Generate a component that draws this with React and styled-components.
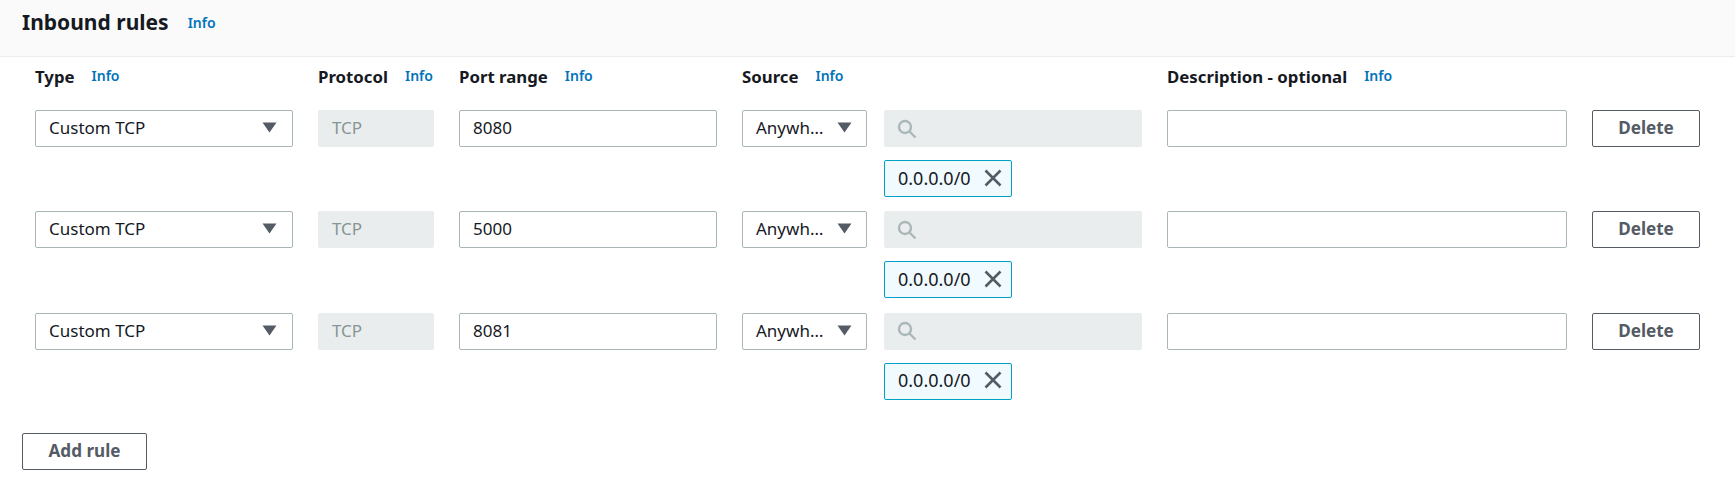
import React from 'react'
import styled, { createGlobalStyle } from 'styled-components'

const GlobalStyle = createGlobalStyle`
  html, body {
    margin: 0;
    padding: 0;
    background: #ffffff;
    font-family: "Noto Sans", "Open Sans", sans-serif;
    color: #16191f;
  }
`

const Page = styled.div`
  width: 1735px;
  height: 478px;
  overflow: hidden;
`

const Header = styled.div`
  height: 57px;
  box-sizing: border-box;
  padding: 7px 22px 0;
  background: #fafafa;
  border-bottom: 1px solid #eaeded;
  display: flex;
  align-items: flex-start;
  gap: 19px;
`

const Title = styled.h2`
  margin: 0;
  font-size: 21px;
  line-height: 30px;
  font-weight: 700;
`

const Info = styled.a`
  font-size: 14px;
  line-height: 20px;
  font-weight: 600;
  color: #0073bb;
  margin-top: ${props => props.$top || 0}px;
`

const Grid = styled.div`
  display: grid;
  grid-template-columns: 258px 116px 258px 400px 400px 108px;
  column-gap: 25px;
  padding-left: 35px;
`

const Label = styled.div`
  display: flex;
  align-items: center;
  gap: 17px;
  height: 40px;
  box-sizing: border-box;
  padding-bottom: 2px;
  margin-bottom: 13px;
  font-size: 16.8px;
  font-weight: 700;
  white-space: nowrap;
`

const Rule = styled.div`
  display: contents;
`

const Cell = styled.div`
  height: 101.4px;
`

const Field = styled.div`
  height: 37px;
  box-sizing: border-box;
  display: flex;
  align-items: center;
  padding: 0 12px 2px 13px;
  font-size: 17px;
  border-radius: 2px;
  background: ${props => (props.$disabled ? '#eaeded' : '#ffffff')};
  color: ${props => (props.$disabled ? '#879596' : '#16191f')};
  border: 1px solid ${props => (props.$disabled ? '#eaeded' : '#aab7b8')};
`

const Select = styled(Field)`
  justify-content: space-between;
  white-space: nowrap;
  padding-right: ${props => props.$caretGap}px;
`

const SourceCell = styled(Cell)`
  display: grid;
  grid-template-columns: 125px 258px;
  column-gap: 17px;
  align-content: start;
`

const SearchBox = styled(Field)`
  padding: 0 0 0 12px;
`

const Tag = styled.div`
  grid-column: 2;
  justify-self: start;
  margin-top: 13px;
  width: 128px;
  height: 37px;
  box-sizing: border-box;
  display: flex;
  align-items: center;
  justify-content: space-between;
  padding: 0 9px 2px 13px;
  font-size: 18px;
  background: #f1faff;
  border: 1px solid #00a1c9;
  border-radius: 2px;
`

const Button = styled.button`
  width: ${props => props.$width}px;
  height: 37px;
  box-sizing: border-box;
  padding: 0 0 2px;
  background: #ffffff;
  border: 1px solid #545b64;
  border-radius: 2px;
  color: #545b64;
  font-family: inherit;
  font-size: 17.1px;
  font-weight: 700;
`

const Footer = styled.div`
  padding: 0 0 0 22px;
  margin-top: 19px;
`

const Caret = () => (
  <svg width="15" height="11" viewBox="0 0 15 11">
    <path d="M0.5 0.5h14L7.5 10.5z" fill="#545b64" />
  </svg>
)

const SearchIcon = () => (
  <svg width="20" height="20" viewBox="0 0 20 20" fill="none" stroke="#aab7b8" strokeWidth="2.4">
    <circle cx="8" cy="8" r="6" />
    <path d="M12.5 12.5l6 6" />
  </svg>
)

const CloseIcon = () => (
  <svg width="18" height="18" viewBox="0 0 18 18" fill="none" stroke="#545b64" strokeWidth="2.6">
    <path d="M1.5 1.5l15 15M16.5 1.5l-15 15" />
  </svg>
)

const ports = ['8080', '5000', '8081']

export default function App() {
  return (
    <Page>
      <GlobalStyle />
      <Header>
        <Title>Inbound rules</Title>
        <Info $top={6}>Info</Info>
      </Header>
      <Grid>
        <Label>Type <Info>Info</Info></Label>
        <Label>Protocol <Info>Info</Info></Label>
        <Label>Port range <Info>Info</Info></Label>
        <Label>Source <Info>Info</Info></Label>
        <Label>Description - optional <Info>Info</Info></Label>
        <Label />
        {ports.map(port => (
          <Rule key={port}>
            <Cell>
              <Select $caretGap={15}>Custom TCP <Caret /></Select>
            </Cell>
            <Cell>
              <Field $disabled>TCP</Field>
            </Cell>
            <Cell>
              <Field>{port}</Field>
            </Cell>
            <SourceCell>
              <Select $caretGap={14}>Anywh… <Caret /></Select>
              <SearchBox $disabled><SearchIcon /></SearchBox>
              <Tag>0.0.0.0/0 <CloseIcon /></Tag>
            </SourceCell>
            <Cell>
              <Field />
            </Cell>
            <Cell>
              <Button $width={108}>Delete</Button>
            </Cell>
          </Rule>
        ))}
      </Grid>
      <Footer>
        <Button $width={125}>Add rule</Button>
      </Footer>
    </Page>
  )
}
